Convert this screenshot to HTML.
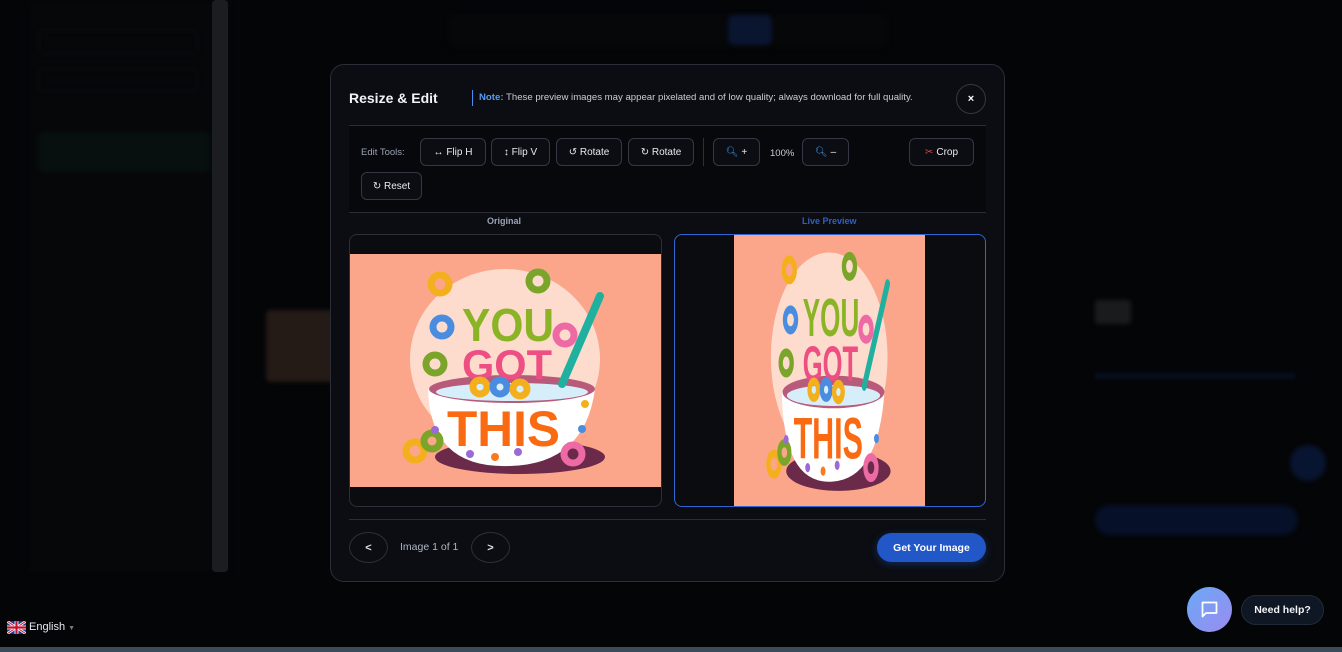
<!DOCTYPE html>
<html><head><meta charset="utf-8">
<style>
*{box-sizing:border-box;margin:0;padding:0}
body{width:1342px;height:652px;overflow:hidden;background:#040507;font-family:"Liberation Sans",sans-serif;position:relative}
.abs{position:absolute}
.bl{filter:blur(2px)}
.modal{left:330px;top:64px;width:675px;height:518px;background:#0b0d12;border:1px solid #2a2e38;border-radius:14px}
.btn{position:absolute;height:28px;top:138px;border:1px solid #343844;border-radius:6px;background:#0b0d12;color:#e8eaef;font-size:10px;display:flex;align-items:center;justify-content:center;gap:3px}
.panel{position:absolute;top:234px;height:273px;border:1px solid #2c2f38;border-radius:8px;background:#0b0c10;overflow:hidden}
.rb{position:absolute;border:1px solid #2c303a;border-radius:16px;color:#dfe3ea;font-size:11px;display:flex;align-items:center;justify-content:center;font-weight:bold}
</style></head><body>
<div class="abs bl" style="left:30px;top:0;width:200px;height:572px;background:#060709"></div>
<div class="abs bl" style="left:38px;top:30px;width:160px;height:24px;border:1px solid #0e1013;border-radius:5px"></div>
<div class="abs bl" style="left:38px;top:68px;width:160px;height:24px;border:1px solid #0e1013;border-radius:5px"></div>
<div class="abs bl" style="left:38px;top:132px;width:172px;height:40px;background:#07100f;border-radius:6px"></div>
<div class="abs" style="left:212px;top:0;width:16px;height:572px;background:#1c1d20;border-radius:4px"></div>
<div class="abs bl" style="left:266px;top:310px;width:70px;height:72px;background:#241a16;border-radius:4px"></div>
<div class="abs bl" style="left:448px;top:14px;width:440px;height:34px;background:#060709;border-radius:8px"></div>
<div class="abs bl" style="left:728px;top:15px;width:44px;height:30px;background:#0a1530;border-radius:6px"></div>
<div class="abs bl" style="left:1095px;top:300px;width:36px;height:24px;background:#1a1b1d;border-radius:3px"></div>
<div class="abs bl" style="left:1095px;top:374px;width:200px;height:4px;background:#08142a"></div>
<div class="abs bl" style="left:1095px;top:505px;width:203px;height:30px;background:#061028;border-radius:15px"></div>
<div class="abs bl" style="left:1290px;top:445px;width:36px;height:36px;background:#081530;border-radius:50%"></div>

<div class="abs modal"></div>
<div class="abs" style="left:349px;top:90px;font-size:14px;font-weight:bold;color:#f2f3f6">Resize &amp; Edit</div>
<div class="abs" style="left:472px;top:90px;width:1px;height:16px;background:#4a8ff0"></div>
<div class="abs" style="left:479px;top:92px;font-size:9.6px;color:#c8ccd4"><b style="color:#5a9cf2">Note:</b> These preview images may appear pixelated and of low quality; always download for full quality.</div>
<div class="abs" style="left:956px;top:84px;width:30px;height:30px;border:1px solid #343844;border-radius:50%;color:#fff;font-size:11px;font-weight:bold;display:flex;align-items:center;justify-content:center">×</div>

<div class="abs" style="left:349px;top:125px;width:637px;height:88px;background:#07080c;border-top:1px solid #2a2d36;border-bottom:1px solid #2a2d36"></div>
<div class="abs" style="left:361px;top:147px;font-size:9.5px;color:#9aa3b5">Edit Tools:</div>
<div class="btn" style="left:420px;width:66px">↔ Flip H</div>
<div class="btn" style="left:491px;width:59px">↕ Flip V</div>
<div class="btn" style="left:556px;width:66px">↺ Rotate</div>
<div class="btn" style="left:628px;width:66px">↻ Rotate</div>
<div class="abs" style="left:703px;top:138px;width:1px;height:28px;background:#2c303a"></div>
<div class="btn" style="left:713px;width:47px"><span style="color:#3aa0f0">🔍︎</span>+</div>
<div class="abs" style="left:770px;top:148px;font-size:9.5px;color:#c8ccd4">100%</div>
<div class="btn" style="left:802px;width:47px"><span style="color:#3aa0f0">🔍︎</span>–</div>
<div class="btn" style="left:909px;width:65px"><span style="color:#e04040">✂</span> Crop</div>
<div class="btn" style="left:361px;top:172px;width:61px">↻ Reset</div>

<div class="abs" style="left:487px;top:216px;font-size:9px;font-weight:bold;color:#9aa3b5">Original</div>
<div class="abs" style="left:802px;top:216px;font-size:9px;font-weight:bold;color:#2f62c0">Live Preview</div>

<div class="panel" style="left:349px;width:313px">
<svg class="abs" style="left:0;top:19px" width="311" height="233" viewBox="0 0 311 233">
<rect width="311" height="233" fill="#fba58a"/>
<ellipse cx="155" cy="105" rx="95" ry="90" fill="#fff4ea" opacity=".7"/>
<ellipse cx="170" cy="203" rx="85" ry="17" fill="#6b2a4a"/>
<path d="M78 135 Q80 215 160 212 Q235 210 245 135 Z" fill="#fff"/>
<ellipse cx="162" cy="135" rx="83" ry="14" fill="#b85a7a"/>
<ellipse cx="162" cy="138" rx="76" ry="9" fill="#d6eefa"/>
<line x1="250" y1="42" x2="212" y2="130" stroke="#1fb0a0" stroke-width="8" stroke-linecap="round"/>
<text x="112" y="87" font-family="Liberation Sans" font-weight="bold" font-size="46" fill="#8ab426" transform="scale(1 1)" textLength="92" lengthAdjust="spacingAndGlyphs">YOU</text>
<text x="112" y="125" font-family="Liberation Sans" font-weight="bold" font-size="42" fill="#ee4f83" textLength="90" lengthAdjust="spacingAndGlyphs">GOT</text>
<text x="97" y="192" font-family="Liberation Sans" font-weight="bold" font-size="50" fill="#fa6a12" textLength="113" lengthAdjust="spacingAndGlyphs">THIS</text>
<g stroke-width="7" fill="none">
<circle cx="90" cy="30" r="9" stroke="#f4b01c"/><circle cx="188" cy="27" r="9" stroke="#7aa52a"/>
<circle cx="92" cy="73" r="9" stroke="#4a8de0"/><circle cx="85" cy="110" r="9" stroke="#7aa52a"/>
<circle cx="215" cy="81" r="9" stroke="#ee6aa5"/><circle cx="65" cy="197" r="9" stroke="#f4b01c"/>
<circle cx="82" cy="187" r="8" stroke="#7aa52a"/><circle cx="223" cy="200" r="9" stroke="#ee6aa5"/>
<circle cx="130" cy="133" r="7" stroke="#f4b01c"/><circle cx="150" cy="133" r="7" stroke="#4a8de0"/><circle cx="170" cy="135" r="7" stroke="#f4b01c"/>
</g>
<g><circle cx="85" cy="176" r="4" fill="#9b6ad6"/><circle cx="120" cy="200" r="4" fill="#9b6ad6"/><circle cx="145" cy="203" r="4" fill="#fa7a20"/><circle cx="168" cy="198" r="4" fill="#9b6ad6"/><circle cx="232" cy="175" r="4" fill="#4a8de0"/><circle cx="235" cy="150" r="4" fill="#f4b01c"/></g>
</svg>
</div>
<div class="panel" style="left:674px;width:312px;border-color:#2f66d4">
<svg class="abs" style="left:59px;top:0" width="191" height="271" viewBox="0 0 311 233" preserveAspectRatio="none">
<rect width="311" height="233" fill="#fba58a"/>
<ellipse cx="155" cy="105" rx="95" ry="90" fill="#fff4ea" opacity=".7"/>
<ellipse cx="170" cy="203" rx="85" ry="17" fill="#6b2a4a"/>
<path d="M78 135 Q80 215 160 212 Q235 210 245 135 Z" fill="#fff"/>
<ellipse cx="162" cy="135" rx="83" ry="14" fill="#b85a7a"/>
<ellipse cx="162" cy="138" rx="76" ry="9" fill="#d6eefa"/>
<line x1="250" y1="42" x2="212" y2="130" stroke="#1fb0a0" stroke-width="8" stroke-linecap="round"/>
<text x="112" y="87" font-family="Liberation Sans" font-weight="bold" font-size="46" fill="#8ab426" textLength="92" lengthAdjust="spacingAndGlyphs">YOU</text>
<text x="112" y="125" font-family="Liberation Sans" font-weight="bold" font-size="42" fill="#ee4f83" textLength="90" lengthAdjust="spacingAndGlyphs">GOT</text>
<text x="97" y="192" font-family="Liberation Sans" font-weight="bold" font-size="50" fill="#fa6a12" textLength="113" lengthAdjust="spacingAndGlyphs">THIS</text>
<g stroke-width="7" fill="none">
<circle cx="90" cy="30" r="9" stroke="#f4b01c"/><circle cx="188" cy="27" r="9" stroke="#7aa52a"/>
<circle cx="92" cy="73" r="9" stroke="#4a8de0"/><circle cx="85" cy="110" r="9" stroke="#7aa52a"/>
<circle cx="215" cy="81" r="9" stroke="#ee6aa5"/><circle cx="65" cy="197" r="9" stroke="#f4b01c"/>
<circle cx="82" cy="187" r="8" stroke="#7aa52a"/><circle cx="223" cy="200" r="9" stroke="#ee6aa5"/>
<circle cx="130" cy="133" r="7" stroke="#f4b01c"/><circle cx="150" cy="133" r="7" stroke="#4a8de0"/><circle cx="170" cy="135" r="7" stroke="#f4b01c"/>
</g>
<g><circle cx="85" cy="176" r="4" fill="#9b6ad6"/><circle cx="120" cy="200" r="4" fill="#9b6ad6"/><circle cx="145" cy="203" r="4" fill="#fa7a20"/><circle cx="168" cy="198" r="4" fill="#9b6ad6"/><circle cx="232" cy="175" r="4" fill="#4a8de0"/></g>
</svg>
</div>

<div class="abs" style="left:349px;top:519px;width:637px;height:1px;background:#2a2d36"></div>
<div class="rb" style="left:349px;top:532px;width:39px;height:31px;border-radius:50%">&lt;</div>
<div class="abs" style="left:400px;top:541px;font-size:10.5px;color:#b0b6c2">Image 1 of 1</div>
<div class="rb" style="left:471px;top:532px;width:39px;height:31px;border-radius:50%">&gt;</div>
<div class="abs" style="left:877px;top:533px;width:109px;height:29px;background:#2257c8;border-radius:15px;color:#fff;font-size:10.5px;font-weight:bold;display:flex;align-items:center;justify-content:center;box-shadow:0 2px 8px rgba(34,87,200,.4)">Get Your Image</div>

<svg class="abs" style="left:7px;top:621px" width="19" height="13" viewBox="0 0 60 40"><rect width="60" height="40" fill="#1f3f8f"/><path d="M0 0L60 40M60 0L0 40" stroke="#fff" stroke-width="8"/><path d="M0 0L60 40M60 0L0 40" stroke="#c8102e" stroke-width="3"/><path d="M30 0V40M0 20H60" stroke="#fff" stroke-width="12"/><path d="M30 0V40M0 20H60" stroke="#c8102e" stroke-width="7"/></svg>
<div class="abs" style="left:29px;top:621px;font-size:11px;color:#e8eaef">English <span style="font-size:7px;color:#777">▼</span></div>
<div class="abs" style="left:1187px;top:587px;width:45px;height:45px;border-radius:50%;background:linear-gradient(135deg,#6aa8f5,#9a8cf0)"></div>
<svg class="abs" style="left:1199px;top:599px" width="21" height="21" viewBox="0 0 24 24"><path d="M4 4h16v12H8l-4 4z" fill="none" stroke="#fff" stroke-width="2" stroke-linejoin="round"/></svg>
<div class="abs" style="left:1241px;top:595px;width:83px;height:30px;background:#0f1624;border:1px solid #222a3a;border-radius:15px;color:#f2f3f6;font-size:10.5px;font-weight:bold;display:flex;align-items:center;justify-content:center">Need help?</div>
<div class="abs" style="left:0;top:647px;width:1342px;height:5px;background:#3c4a5a"></div>
</body></html>
